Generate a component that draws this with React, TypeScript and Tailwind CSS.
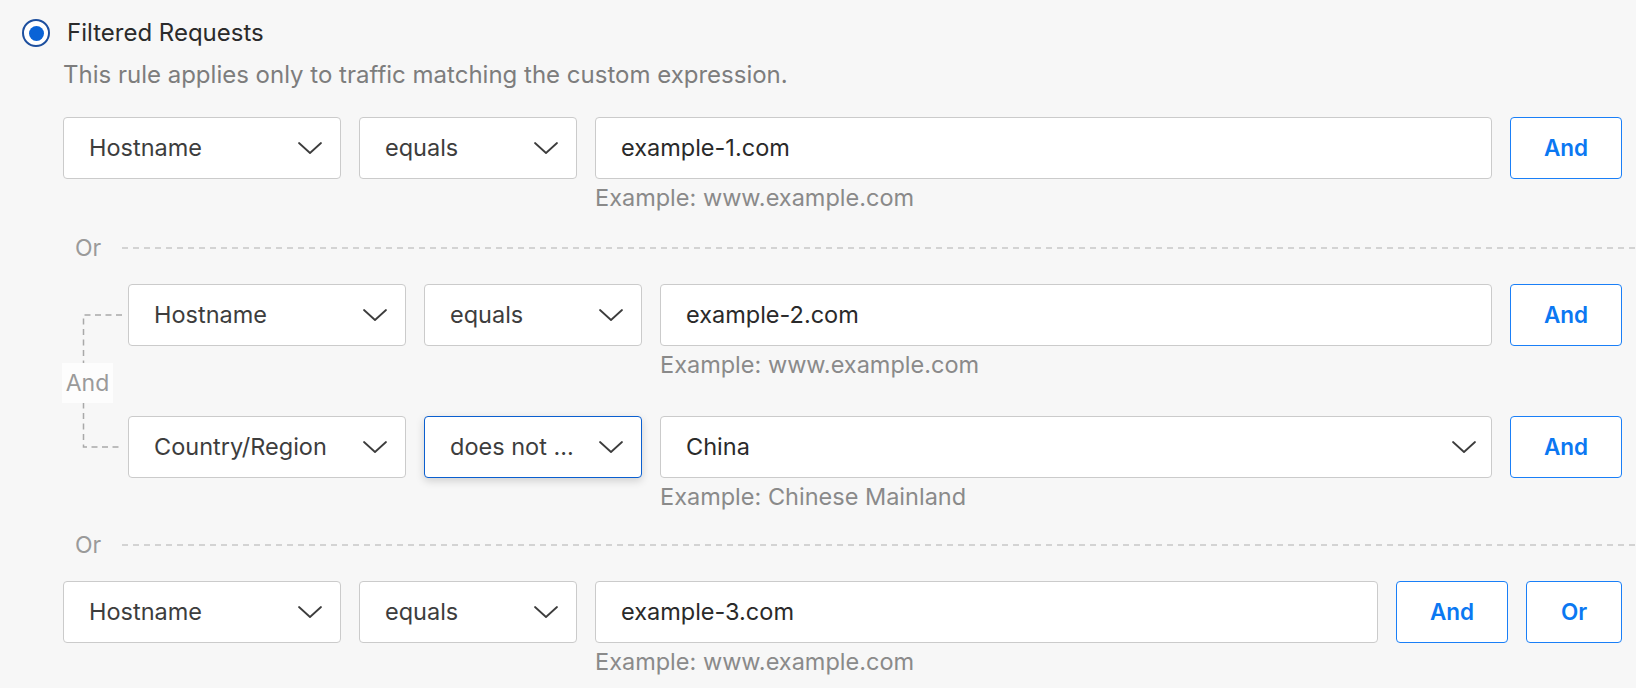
import React from 'react';

const Chevron = () => (
  <svg width="26" height="14" viewBox="0 0 26 14" fill="none" className="shrink-0">
    <path d="M2 2 L13 12 L24 2" stroke="#3c3c3c" strokeWidth="1.8" strokeLinecap="round" strokeLinejoin="round" />
  </svg>
);

const Select = ({ value, width, focused }: { value: string; width: string; focused?: boolean }) => (
  <div
    className={`${width} h-[62px] shrink-0 flex items-center justify-between pl-[25px] pr-[17px] rounded-[4px] bg-white ${
      focused
        ? 'border-[1.5px] border-[#0b5fcf] shadow-[0_3px_8px_rgba(0,0,0,0.16)]'
        : 'border-[1.5px] border-[#cbcbcb]'
    }`}
  >
    <span className="text-[23.5px] text-[#3d3d3d] whitespace-nowrap">{value}</span>
    <Chevron />
  </div>
);

const ValueField = ({ value, hint, dropdown }: { value: string; hint: string; dropdown?: boolean }) => (
  <div className="flex-1 flex flex-col min-w-0">
    <div className="h-[62px] flex items-center justify-between pl-[25px] pr-[14px] rounded-[4px] bg-white border-[1.5px] border-[#cbcbcb]">
      <span className="text-[23.5px] text-[#2a2a2a]">{value}</span>
      {dropdown && <Chevron />}
    </div>
    <div className="mt-[6px] h-[26px] leading-[26px] text-[23.5px] text-[#8a8a8a]">{hint}</div>
  </div>
);

const BlueButton = ({ label, width }: { label: string; width: string }) => (
  <button
    className={`${width} h-[62px] shrink-0 rounded-[4px] bg-white border-[1.5px] border-[#1a7ff7] text-[22.5px] font-semibold text-[#0b78f2]`}
  >
    {label}
  </button>
);

type Rule = { field: string; op: string; value: string; hint: string; dropdown?: boolean; focused?: boolean };

const RuleRow = ({ rule, children }: { rule: Rule; children: React.ReactNode }) => (
  <div className="flex items-start gap-[18px]">
    <Select value={rule.field} width="w-[278px]" />
    <Select value={rule.op} width="w-[218px]" focused={rule.focused} />
    <ValueField value={rule.value} hint={rule.hint} dropdown={rule.dropdown} />
    {children}
  </div>
);

const OrDivider = ({ className }: { className: string }) => (
  <div className={`flex items-center h-[26px] ${className}`}>
    <span className="w-[59px] pl-[12px] text-[23px] leading-[26px] text-[#9a9a9a]">Or</span>
    <div className="flex-1 h-[1.5px] mr-[-14px] bg-[repeating-linear-gradient(90deg,#d3d3d3_0_6px,transparent_6px_11px)]" />
  </div>
);

// dashed bracket joining the two AND-ed rows
const Bracket = () => (
  <svg width="41" height="134" viewBox="0 0 41 134" fill="none" className="absolute left-[19px] top-[30px]">
    <path d="M40 1 H1.5 V133 H40" stroke="#a9a9a9" strokeWidth="1.5" strokeDasharray="6 4.5" />
  </svg>
);

export default function App() {
  return (
    <div className="w-full h-[688px] overflow-hidden bg-[#f7f7f7] font-['Inter','Noto_Sans',sans-serif]">
      <div className="pt-[19px] pl-[22px] flex items-center gap-[17px]">
        <div className="w-[28px] h-[28px] rounded-full border-[2.5px] border-[#1d4f9e] bg-white flex items-center justify-center">
          <div className="w-[15px] h-[15px] rounded-full bg-[#0a63d6]" />
        </div>
        <span className="text-[24px] leading-[28px] text-[#2b2b2b]">Filtered Requests</span>
      </div>
      <div className="pl-[63px] mt-[15px] text-[24px] text-[#7d7d7d] leading-[26px]">
        This rule applies only to traffic matching the custom expression.
      </div>

      <div className="pl-[63px] pr-[14px] mt-[29px]">
        <RuleRow rule={{ field: 'Hostname', op: 'equals', value: 'example-1.com', hint: 'Example: www.example.com' }}>
          <BlueButton label="And" width="w-[112px]" />
        </RuleRow>

        <OrDivider className="mt-[24px]" />

        <div className="relative flex mt-[23px]">
          <div className="w-[65px] shrink-0 relative">
            <Bracket />
            <div className="absolute left-[-1px] top-[79px] w-[51px] h-[40px] bg-[#fdfdfd] flex items-center justify-center text-[23px] text-[#9a9a9a]">
              And
            </div>
          </div>
          <div className="flex-1 flex flex-col gap-[38px]">
            <RuleRow rule={{ field: 'Hostname', op: 'equals', value: 'example-2.com', hint: 'Example: www.example.com' }}>
              <BlueButton label="And" width="w-[112px]" />
            </RuleRow>
            <RuleRow
              rule={{
                field: 'Country/Region',
                op: 'does not ...',
                value: 'China',
                hint: 'Example: Chinese Mainland',
                dropdown: true,
                focused: true,
              }}
            >
              <BlueButton label="And" width="w-[112px]" />
            </RuleRow>
          </div>
        </div>

        <OrDivider className="mt-[22px]" />

        <div className="mt-[23px]">
          <RuleRow rule={{ field: 'Hostname', op: 'equals', value: 'example-3.com', hint: 'Example: www.example.com' }}>
            <div className="flex gap-[18px]">
              <BlueButton label="And" width="w-[112px]" />
              <BlueButton label="Or" width="w-[96px]" />
            </div>
          </RuleRow>
        </div>
      </div>
    </div>
  );
}
